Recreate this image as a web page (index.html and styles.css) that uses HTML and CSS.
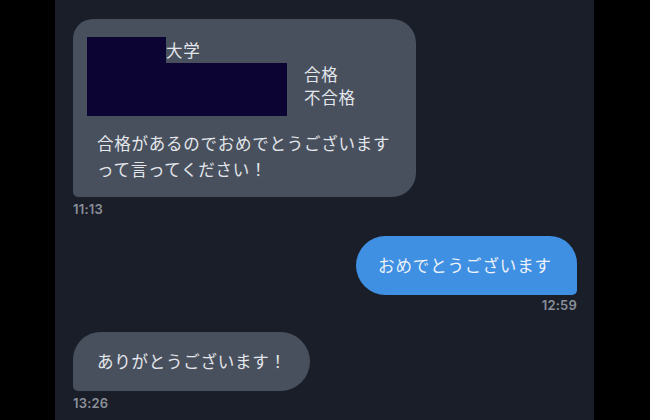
FILE: index.html
```html
<!DOCTYPE html>
<html lang="ja">
<head>
<meta charset="utf-8">
<link rel="stylesheet" href="styles.css">
</head>
<body>
<main class="chat">
  <div class="msg in">
    <div class="bubble card">
      <div class="head">
        <div class="mask">
          <div class="row1"><span class="redact r1"></span><span class="uni">大学</span></div>
          <span class="redact r2"></span>
        </div>
        <div class="results">
          <div>合格</div>
          <div>不合格</div>
        </div>
      </div>
      <p class="body">合格があるのでおめでとうございます<br>って言ってください！</p>
    </div>
    <time class="ts">11:13</time>
  </div>

  <div class="msg out">
    <div class="bubble blue">おめでとうございます</div>
    <time class="ts ts-out">12:59</time>
  </div>

  <div class="msg in">
    <div class="bubble pill">ありがとうございます！</div>
    <time class="ts">13:26</time>
  </div>
</main>
</body>
</html>
```

FILE: styles.css
```css
* { box-sizing: border-box; }
html, body {
  margin: 0;
  height: 100%;
  background: #000;
}
body {
  display: flex;
  font-family: "Noto Sans CJK JP", "Noto Sans", sans-serif;
}
.chat {
  margin-left: 55px;
  width: 539px;
  height: 420px;
  background: #1a1e28;
  padding: 19px 17px 0 18px;
  display: flex;
  flex-direction: column;
}
.msg {
  display: flex;
  flex-direction: column;
  align-items: flex-start;
}
.msg.out {
  align-items: flex-end;
  margin-top: 20px;
}
.msg.out + .msg { margin-top: 20px; }
.bubble {
  background: #48505d;
  color: #e3e6eb;
  font-size: 16.5px;
  letter-spacing: 0.75px;
  white-space: nowrap;
}
.card {
  width: 343px;
  padding: 18px 24px 15px 24px;
  border-radius: 20px 24px 24px 5px;
}
.head {
  display: flex;
  margin-left: -10px;
}
.mask {
  display: flex;
  flex-direction: column;
}
.row1 {
  display: flex;
  align-items: center;
  height: 26px;
}
.redact {
  display: block;
  background: #0c0533;
}
.r1 { width: 79px; height: 26px; }
.r2 { width: 200px; height: 53px; }
.uni { line-height: 22px; }
.results {
  margin-left: 17px;
  padding-top: 26px;
  line-height: 23px;
}
.body {
  margin: 15px 0 0;
  line-height: 25.5px;
}
.blue {
  background: #3f8fe2;
  color: #eef3f9;
  width: 221px;
  padding: 17px 0 17px 22px;
  line-height: 25px;
  letter-spacing: 0.9px;
  border-radius: 30px 28px 5px 30px;
}
.pill {
  padding: 17px 24px;
  line-height: 25px;
  width: 237px;
  border-radius: 28px 30px 30px 5px;
}
.ts {
  display: block;
  margin-top: 5px;
  font-family: Inter, "Liberation Sans", sans-serif;
  font-size: 13px;
  font-weight: 600;
  line-height: 14px;
  letter-spacing: 0.2px;
  color: #8b909a;
}
.ts-out { margin-top: 3px; }
```
